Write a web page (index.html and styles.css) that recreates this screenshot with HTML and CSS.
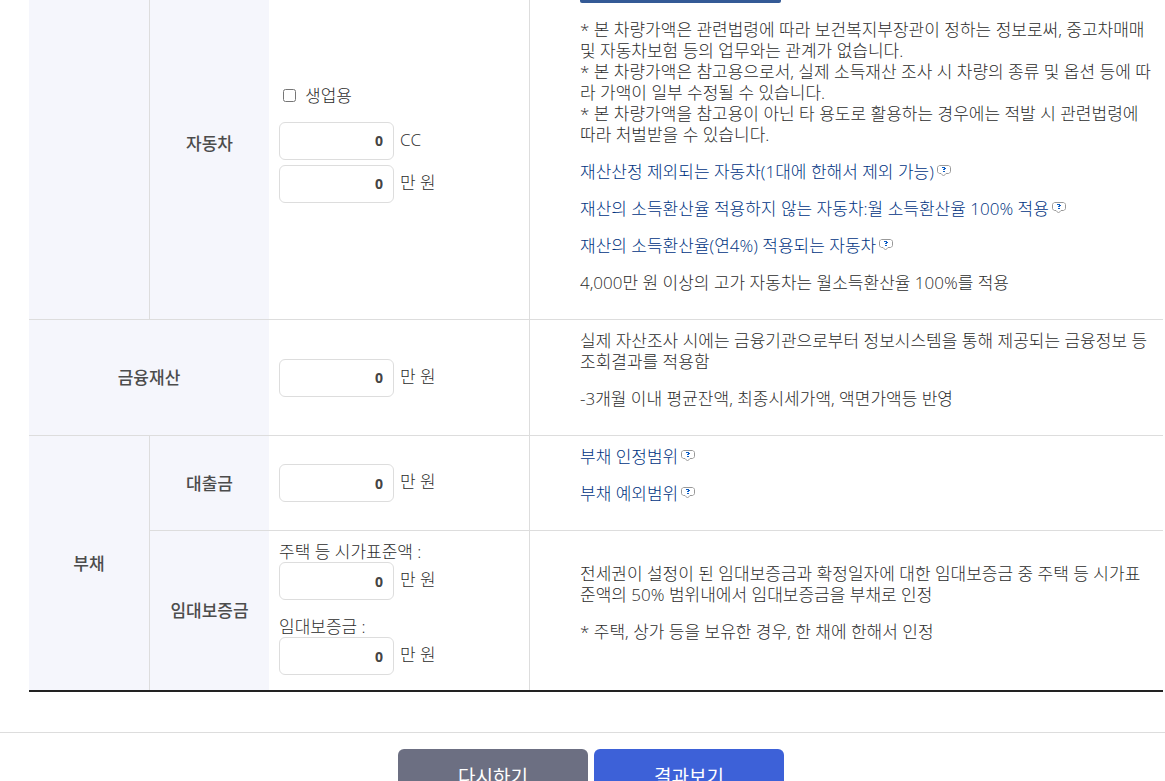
FILE: index.html
```
<!DOCTYPE html>
<html lang="ko">
  <head>
    <meta charset="utf-8">
    <title>모의계산</title>
    <link rel="stylesheet" href="styles.css">
  </head>
  <body>
    <!-- speech bubble used by every help link -->
    <svg class="defs" aria-hidden="true">
      <symbol id="help" viewBox="0 0 14 12">
        <path d="M2.500 .5h9l1 .5.5.5.5 1v4l-.5 1-.5.5-1 .5H9L6.500 11 4 8.500H2.500l-1-.5L1 7.500l-.5-1v-4l.5-1L1.500 1z" fill="#fff" stroke="#999"/>
        <path d="M5 2h3v1h1v1H8v1H6V4h1V3H5zM6 6h2v1H6z" fill="#0b5cc4"/>
      </symbol>
    </svg>

    <form class="page">
      <table class="calc">
        <colgroup>
          <col class="c1"><col class="c2"><col class="c3"><col>
        </colgroup>
        <tbody>
          <tr>
            <th class="line"></th>
            <th scope="row">자동차</th>
            <td class="line">
              <div class="check">
                <input type="checkbox" id="work">
                <label for="work">생업용</label>
              </div>
              <div class="field">
                <input type="text" id="cc" value="0">
                <label for="cc">CC</label>
              </div>
              <div class="field">
                <input type="text" id="car" value="0">
                <label for="car">만 원</label>
              </div>
            </td>
            <td class="note">
              <button type="button" class="lookup" aria-label="차량가액 조회"></button>
              <p>* 본 차량가액은 관련법령에 따라 보건복지부장관이 정하는 정보로써, 중고차매매 및 자동차보험 등의 업무와는 관계가 없습니다.<br>
              * 본 차량가액은 참고용으로서, 실제 소득재산 조사 시 차량의 종류 및 옵션 등에 따라 가액이 일부 수정될 수 있습니다.<br>
              * 본 차량가액을 참고용이 아닌 타 용도로 활용하는 경우에는 적발 시 관련법령에 따라 처벌받을 수 있습니다.</p>
              <p><a href="#">재산산정 제외되는 자동차(1대에 한해서 제외 가능)<svg class="help"><use href="#help"/></svg></a></p>
              <p><a href="#">재산의 소득환산율 적용하지 않는 자동차:월 소득환산율 100% 적용<svg class="help"><use href="#help"/></svg></a></p>
              <p><a href="#">재산의 소득환산율(연4%) 적용되는 자동차<svg class="help"><use href="#help"/></svg></a></p>
              <p>4,000만 원 이상의 고가 자동차는 월소득환산율 100%를 적용</p>
            </td>
          </tr>
          <tr>
            <th scope="row" colspan="2">금융재산</th>
            <td class="line">
              <div class="field">
                <input type="text" id="finance" value="0">
                <label for="finance">만 원</label>
              </div>
            </td>
            <td class="note">
              <p>실제 자산조사 시에는 금융기관으로부터 정보시스템을 통해 제공되는 금융정보 등 조회결과를 적용함</p>
              <p>-3개월 이내 평균잔액, 최종시세가액, 액면가액등 반영</p>
            </td>
          </tr>
          <tr>
            <th scope="rowgroup" rowspan="2" class="line last">부채</th>
            <th scope="row">대출금</th>
            <td class="line">
              <div class="field">
                <input type="text" id="loan" value="0">
                <label for="loan">만 원</label>
              </div>
            </td>
            <td class="note">
              <p><a href="#">부채 인정범위<svg class="help"><use href="#help"/></svg></a></p>
              <p><a href="#">부채 예외범위<svg class="help"><use href="#help"/></svg></a></p>
            </td>
          </tr>
          <tr>
            <th scope="row" class="last">임대보증금</th>
            <td class="line last rent">
              <label for="house">주택 등 시가표준액 :</label>
              <div class="field">
                <input type="text" id="house" value="0">
                <span>만 원</span>
              </div>
              <label for="deposit">임대보증금 :</label>
              <div class="field">
                <input type="text" id="deposit" value="0">
                <span>만 원</span>
              </div>
            </td>
            <td class="note last">
              <p>전세권이 설정이 된 임대보증금과 확정일자에 대한 임대보증금 중 주택 등 시가표준액의 50% 범위내에서 임대보증금을 부채로 인정</p>
              <p>* 주택, 상가 등을 보유한 경우, 한 채에 한해서 인정</p>
            </td>
          </tr>
        </tbody>
      </table>

      <div class="buttons">
        <button type="reset" class="btn">다시하기</button>
        <button type="submit" class="btn blue">결과보기</button>
      </div>
    </form>
  </body>
</html>
```
FILE: styles.css
```
body{
  margin:0;
  background-color:#fff;
  color:#2c2c2c;
  font-family:"Open Sans", "Noto Sans CJK KR", sans-serif;
  font-size:17px;
  font-weight:300;
  line-height:21px;
  overflow:hidden;
}
.defs{
  display:none;
}
.page{
  margin-top:-32px;
}

/* table */
.calc{
  width:calc(100% - 31px);
  margin-left:29px;
  table-layout:fixed;
  border-collapse:separate;
  border-spacing:0;
  border-bottom:2px solid #222;
}
.c1{ width:121px; }
.c2{ width:119px; }
.c3{ width:261px; }
.calc th,
.calc td{
  padding:10px;
  border-bottom:1px solid #ddd;
  vertical-align:middle;
}
.calc th{
  padding:10px 0;
  background-color:#f5f6fc;
  color:#4c4c4c;
  font-weight:500;
}
.calc .line{
  border-right:1px solid #ddd;
}
.calc .last{
  border-bottom:0;
}
.calc .note{
  padding-left:50px;
}
.calc .rent{
  padding-bottom:15px;
}
.note p{
  margin:0 0 16px;
}
.note a{
  color:#00337f;
  text-decoration:none;
}
.help{
  width:14px;
  height:12px;
  margin-left:3px;
  vertical-align:1px;
}
.lookup{
  display:block;
  width:201px;
  height:25px;
  margin-bottom:16px;
  border:0;
  border-radius:2px;
  background-color:#345a96;
}

/* inputs */
.check{
  display:flex;
  align-items:center;
  margin-bottom:16px;
}
.check input{
  width:13px;
  height:13px;
  margin:0 9px 0 4px;
}
.field{
  display:flex;
  align-items:center;
  gap:6px;
}
.field label,
.field span{
  padding-bottom:3px;
}
.field + .field{
  margin-top:5px;
}
.field + label{
  display:block;
  margin-top:16px;
}
.rent > label{
  display:block;
}
.field input{
  box-sizing:border-box;
  width:115px;
  height:38px;
  padding:0 10px;
  border:1px solid #ddd;
  border-radius:6px;
  color:#444;
  font-family:inherit;
  font-size:14px;
  font-weight:700;
  text-align:right;
}

/* bottom buttons */
.buttons{
  display:flex;
  justify-content:center;
  gap:6px;
  margin-top:40px;
  padding:16px 0 16px 17px;
  border-top:1px solid #ddd;
}
.btn{
  width:190px;
  height:54px;
  border:0;
  border-radius:6px;
  background-color:#6c6f82;
  color:#fff;
  font-family:inherit;
  font-size:19px;
  font-weight:400;
}
.blue{
  background-color:#3d61d8;
}
```
